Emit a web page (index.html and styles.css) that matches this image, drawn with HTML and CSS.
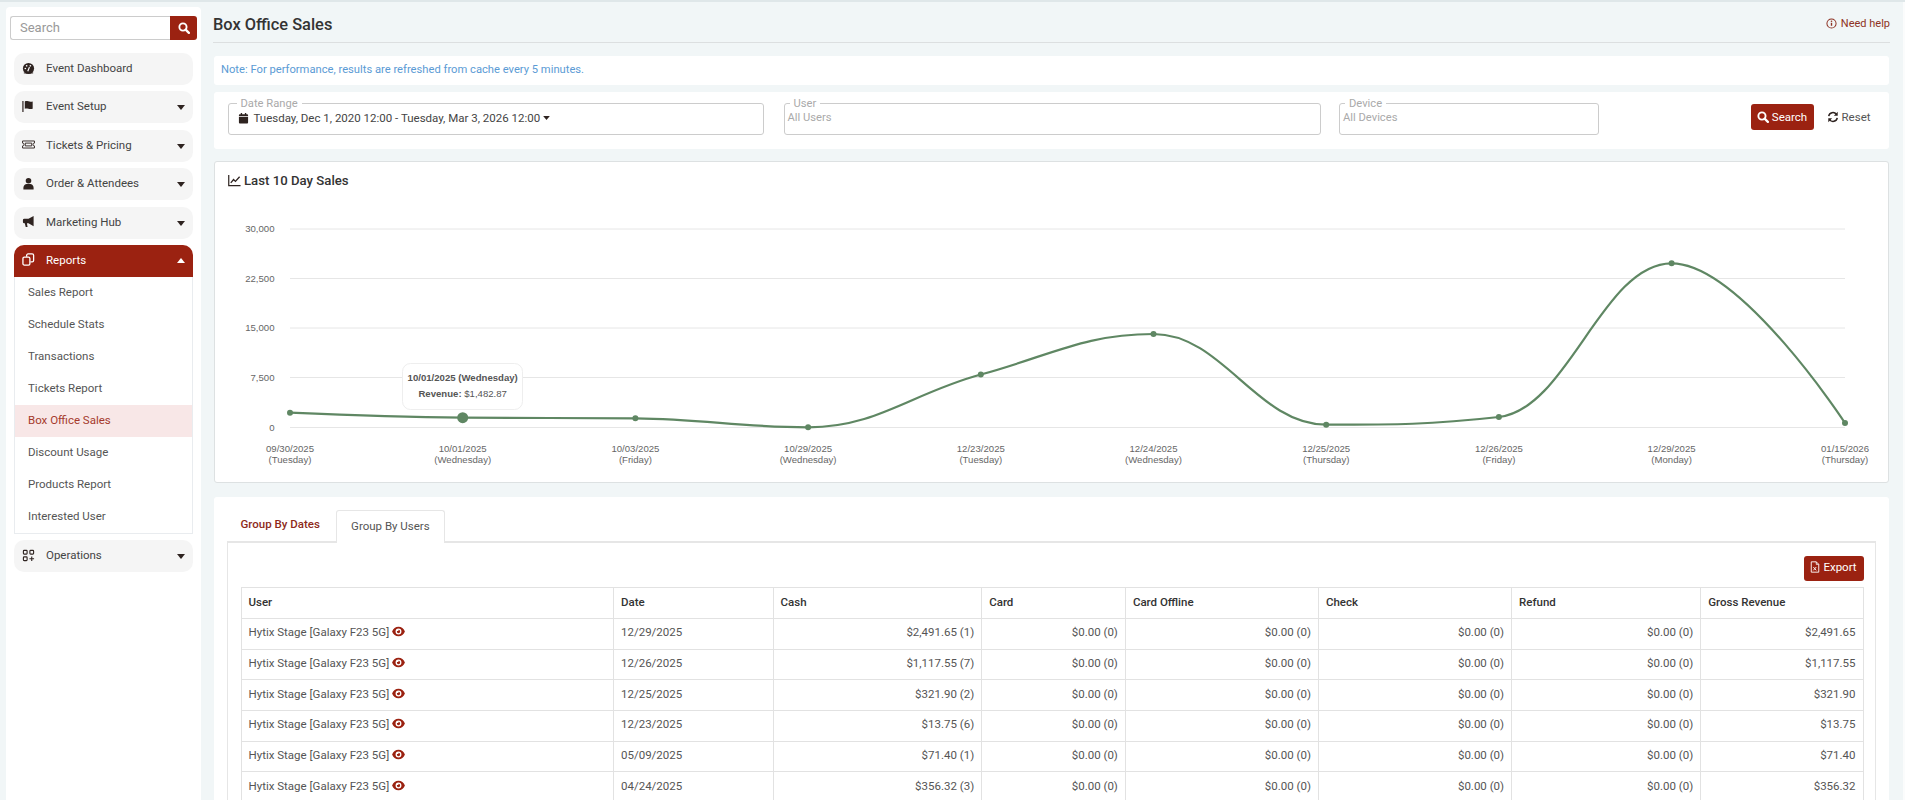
FILE: index.html
```html
<!DOCTYPE html>
<html lang="en">
<head>
<meta charset="utf-8">
<title>Box Office Sales</title>
<link rel="stylesheet" href="styles.css">
</head>
<body>
<svg class="defs" aria-hidden="true">
  <symbol id="i-caret" viewBox="0 0 10 6"><path d="M0 0h10L5 6z" fill="currentColor"/></symbol>
  <symbol id="i-search" viewBox="0 0 14 14"><circle cx="5.8" cy="5.8" r="4.2" fill="none" stroke="currentColor" stroke-width="2.2"/><path d="M8.9 8.9l3.8 3.8" stroke="currentColor" stroke-width="2.6" stroke-linecap="round"/></symbol>
  <symbol id="i-eye" viewBox="0 0 14 12"><path fill="currentColor" fill-rule="evenodd" d="M7 0.8c3.2 0 5.8 2.2 7 5.2-1.2 3-3.8 5.2-7 5.2S1.200 9 0 6c1.200-3 3.800-5.200 7-5.200zM7 2.800a3.200 3.200 0 1 0 0 6.400 3.200 3.200 0 0 0 0-6.400z"/><path fill="currentColor" d="M7 4.200a1.800 1.800 0 1 1-1.800 1.800c0-.5.3-.5.800-.5.600 0 1-.4 1-1 0-.2-.1-.3 0-.3z"/></symbol>
</svg>
<div class="app">
  <aside class="sidebar">
    <form class="side-search">
      <input class="side-input" type="text" placeholder="Search">
      <button class="side-btn" type="button"><svg class="ic-13"><use href="#i-search"/></svg></button>
    </form>
    <nav class="menu">
      <a class="item"><svg class="item-ic" viewBox="0 0 14 14"><circle cx="7" cy="7" r="6" fill="#2e2320"/><circle cx="3.600" cy="7" r=".9" fill="#fff"/><circle cx="5" cy="4" r=".9" fill="#fff"/><circle cx="9" cy="4" r=".9" fill="#fff"/><path d="M6.200 10L8 5.500" stroke="#fff" stroke-width="1.300"/><path d="M2 11.800h10" stroke="#2e2320" stroke-width="1"/></svg><span class="item-t">Event Dashboard</span></a>
      <a class="item"><svg class="item-ic" viewBox="0 0 14 14"><path d="M1 1v12" stroke="#2e2320" stroke-width="1.300"/><path d="M3 1.500c3-1 4.500 1 8.500 0v8c-4 1-5.500-1-8.500 0z" fill="#2e2320"/></svg><span class="item-t">Event Setup</span><svg class="caret"><use href="#i-caret"/></svg></a>
      <a class="item"><svg class="item-ic" viewBox="0 0 14 14"><path d="M.6 3.200h12.800v2.300a1.500 1.500 0 0 0 0 3v2.300H.6V8.500a1.500 1.500 0 0 0 0-3z" fill="none" stroke="#2e2320" stroke-width="1"/><path d="M3.500 5.500h7v3h-7z" fill="none" stroke="#2e2320" stroke-width="1"/></svg><span class="item-t">Tickets &amp; Pricing</span><svg class="caret"><use href="#i-caret"/></svg></a>
      <a class="item"><svg class="item-ic" viewBox="0 0 14 14"><circle cx="7" cy="4" r="3" fill="#2e2320"/><path d="M1.500 13.500v-2c0-2.500 2-4 3.500-4h4c1.500 0 3.500 1.500 3.500 4v2z" fill="#2e2320"/></svg><span class="item-t">Order &amp; Attendees</span><svg class="caret"><use href="#i-caret"/></svg></a>
      <a class="item"><svg class="item-ic" viewBox="0 0 14 14"><path d="M12.500 1L7 4H2.500A1.500 1.500 0 0 0 1 5.500v2A1.500 1.500 0 0 0 2.500 9H3l1 4h2L5.300 9H7l5.500 3z" fill="#2e2320"/></svg><span class="item-t">Marketing Hub</span><svg class="caret"><use href="#i-caret"/></svg></a>
      <a class="item item-open"><svg class="item-ic" viewBox="0 0 14 14"><rect x="1" y="4.500" width="7.500" height="8.500" rx="1.500" fill="none" stroke="#fff" stroke-width="1.400"/><path d="M5 4V2.500C5 1.700 5.700 1 6.500 1h4.500c.8 0 1.500.7 1.500 1.500V8c0 .8-.7 1.500-1.500 1.500H9" fill="none" stroke="#fff" stroke-width="1.400"/></svg><span class="item-t">Reports</span><svg class="caret caret-up"><use href="#i-caret"/></svg></a>
      <div class="sub">
        <a class="sub-item">Sales Report</a>
        <a class="sub-item">Schedule Stats</a>
        <a class="sub-item">Transactions</a>
        <a class="sub-item">Tickets Report</a>
        <a class="sub-item sub-active">Box Office Sales</a>
        <a class="sub-item">Discount Usage</a>
        <a class="sub-item">Products Report</a>
        <a class="sub-item">Interested User</a>
      </div>
      <a class="item"><svg class="item-ic" viewBox="0 0 14 14"><g fill="none" stroke="#2e2320" stroke-width="1.200"><rect x="1.500" y="1.500" width="4" height="4" rx=".8"/><rect x="8.500" y="1.500" width="4" height="4" rx=".8"/><rect x="1.500" y="8.500" width="4" height="4" rx=".8"/><path d="M10.500 8v5M8 10.500h5"/></g></svg><span class="item-t">Operations</span><svg class="caret"><use href="#i-caret"/></svg></a>
    </nav>
  </aside>
  <main class="main">
    <header class="page-head">
      <h1 class="page-title">Box Office Sales</h1>
      <a class="help"><svg class="help-ic" viewBox="0 0 12 12"><circle cx="6" cy="6" r="5" fill="none" stroke="currentColor" stroke-width="1.100"/><path d="M6 5.200v3.300" stroke="currentColor" stroke-width="1.500"/><circle cx="6" cy="3.500" r=".9" fill="currentColor"/></svg>Need help</a>
    </header>
    <div class="note">Note: For performance, results are refreshed from cache every 5 minutes.</div>
    <section class="filters">
      <fieldset class="fs fs-date">
        <legend class="fs-l">Date Range</legend>
        <div class="range"><svg class="cal" viewBox="0 0 12 12"><path d="M1 4.500h10V11a1 1 0 0 1-1 1H2a1 1 0 0 1-1-1zM1 3.700V3a1 1 0 0 1 1-1h1V.5h1.500V2h3V.5H9V2h1a1 1 0 0 1 1 1v.7z" fill="#2e2320"/></svg>Tuesday, Dec 1, 2020 12:00 - Tuesday, Mar 3, 2026 12:00<svg class="range-caret"><use href="#i-caret"/></svg></div>
      </fieldset>
      <fieldset class="fs fs-user">
        <legend class="fs-l">User</legend>
        <div class="ph">All Users</div>
      </fieldset>
      <fieldset class="fs fs-device">
        <legend class="fs-l">Device</legend>
        <div class="ph">All Devices</div>
      </fieldset>
      <div class="actions">
        <button class="btn" type="button"><svg class="ic-12"><use href="#i-search"/></svg>Search</button>
        <button class="reset" type="button"><svg class="ic-12" viewBox="0 0 14 14"><path d="M2 6a5 5 0 0 1 9-2M12 8a5 5 0 0 1-9 2" fill="none" stroke="#2e2320" stroke-width="1.700"/><path d="M12.500 1v4.500H8zM1.500 13V8.500H6z" fill="#2e2320"/></svg>Reset</button>
      </div>
    </section>
    <section class="chart-card">
      <h2 class="chart-title"><svg class="chart-ic" viewBox="0 0 14 14"><path d="M.8 1v11.500H13.500" fill="none" stroke="#2e2320" stroke-width="1.300"/><path d="M3 9.500l3-3.500 2 2 4.500-5" fill="none" stroke="#2e2320" stroke-width="1.400"/></svg>Last 10 Day Sales</h2>
      <svg class="chart" viewBox="215 200 1674 282" width="1674" height="282">
        <g class="grid">
          <path d="M290 229H1845M290 278.500H1845M290 328H1845M290 377.500H1845M290 427.500H1845"/>
        </g>
        <g class="y-labels">
          <text x="274.500" y="232">30,000</text>
          <text x="274.500" y="281.500">22,500</text>
          <text x="274.500" y="331">15,000</text>
          <text x="274.500" y="380.500">7,500</text>
          <text x="274.500" y="430.500">0</text>
        </g>
        <path class="line" d="M290 412.700C290 412.700 393.600 417.100 462.700 417.700C531.800 418.300 566.300 417.700 635.400 418.300C704.500 418.900 739 427.300 808.100 427.300C877.200 427.300 911.700 393.160 980.800 374.500C1049.900 355.840 1084.400 334 1153.500 334C1222.600 334 1257.100 424.700 1326.200 424.700C1395.300 424.700 1429.800 424.700 1498.900 417C1568 409.300 1602.500 263.300 1671.600 263.300C1740.700 263.300 1845 423 1845 423"/>
        <g class="dots">
          <circle cx="290" cy="412.700" r="3"/><circle cx="462.700" cy="417.700" r="5.500"/><circle cx="635.400" cy="418.300" r="3"/><circle cx="808.100" cy="427.300" r="3"/><circle cx="980.800" cy="374.500" r="3"/><circle cx="1153.500" cy="334" r="3"/><circle cx="1326.200" cy="424.700" r="3"/><circle cx="1498.900" cy="417" r="3"/><circle cx="1671.600" cy="263.300" r="3"/><circle cx="1845" cy="423" r="3"/>
        </g>
        <g class="x-labels">
          <text x="290" y="452">09/30/2025</text><text x="290" y="463">(Tuesday)</text>
          <text x="462.700" y="452">10/01/2025</text><text x="462.700" y="463">(Wednesday)</text>
          <text x="635.400" y="452">10/03/2025</text><text x="635.400" y="463">(Friday)</text>
          <text x="808.100" y="452">10/29/2025</text><text x="808.100" y="463">(Wednesday)</text>
          <text x="980.800" y="452">12/23/2025</text><text x="980.800" y="463">(Tuesday)</text>
          <text x="1153.500" y="452">12/24/2025</text><text x="1153.500" y="463">(Wednesday)</text>
          <text x="1326.200" y="452">12/25/2025</text><text x="1326.200" y="463">(Thursday)</text>
          <text x="1498.900" y="452">12/26/2025</text><text x="1498.900" y="463">(Friday)</text>
          <text x="1671.600" y="452">12/29/2025</text><text x="1671.600" y="463">(Monday)</text>
          <text x="1845" y="452">01/15/2026</text><text x="1845" y="463">(Thursday)</text>
        </g>
        <g class="tip">
          <rect x="402.500" y="363.500" width="120" height="46" rx="8"/>
          <text class="tip-b" x="462.700" y="381">10/01/2025 (Wednesday)</text>
          <text class="tip-v" x="462.700" y="397"><tspan class="tip-b">Revenue:</tspan> $1,482.87</text>
        </g>
      </svg>
    </section>
    <section class="table-card">
      <div class="tabs">
        <a class="tab tab-link">Group By Dates</a>
        <a class="tab tab-active">Group By Users</a>
      </div>
      <div class="tab-body">
        <div class="export-row">
          <button class="btn btn-export" type="button"><svg class="ic-export" viewBox="0 0 12 14"><path d="M1.500.8h6l3 3v9.400h-9z" fill="none" stroke="#fff" stroke-width="1.100"/><path d="M7.500.8v3h3" fill="none" stroke="#fff" stroke-width="1"/><path d="M4 7l3.500 4M7.500 7L4 11" stroke="#fff" stroke-width="1.100"/></svg>Export</button>
        </div>
        <table class="grid-table">
          <colgroup>
            <col class="c-user"><col class="c-date"><col class="c-cash"><col class="c-card"><col class="c-off"><col class="c-check"><col class="c-refund"><col class="c-gross">
          </colgroup>
          <thead>
            <tr><th>User</th><th>Date</th><th>Cash</th><th>Card</th><th>Card Offline</th><th>Check</th><th>Refund</th><th>Gross Revenue</th></tr>
          </thead>
          <tbody>
            <tr><td>Hytix Stage [Galaxy F23 5G] <svg class="eye"><use href="#i-eye"/></svg></td><td>12/29/2025</td><td class="num">$2,491.65 (1)</td><td class="num">$0.00 (0)</td><td class="num">$0.00 (0)</td><td class="num">$0.00 (0)</td><td class="num">$0.00 (0)</td><td class="num">$2,491.65</td></tr>
            <tr><td>Hytix Stage [Galaxy F23 5G] <svg class="eye"><use href="#i-eye"/></svg></td><td>12/26/2025</td><td class="num">$1,117.55 (7)</td><td class="num">$0.00 (0)</td><td class="num">$0.00 (0)</td><td class="num">$0.00 (0)</td><td class="num">$0.00 (0)</td><td class="num">$1,117.55</td></tr>
            <tr><td>Hytix Stage [Galaxy F23 5G] <svg class="eye"><use href="#i-eye"/></svg></td><td>12/25/2025</td><td class="num">$321.90 (2)</td><td class="num">$0.00 (0)</td><td class="num">$0.00 (0)</td><td class="num">$0.00 (0)</td><td class="num">$0.00 (0)</td><td class="num">$321.90</td></tr>
            <tr><td>Hytix Stage [Galaxy F23 5G] <svg class="eye"><use href="#i-eye"/></svg></td><td>12/23/2025</td><td class="num">$13.75 (6)</td><td class="num">$0.00 (0)</td><td class="num">$0.00 (0)</td><td class="num">$0.00 (0)</td><td class="num">$0.00 (0)</td><td class="num">$13.75</td></tr>
            <tr><td>Hytix Stage [Galaxy F23 5G] <svg class="eye"><use href="#i-eye"/></svg></td><td>05/09/2025</td><td class="num">$71.40 (1)</td><td class="num">$0.00 (0)</td><td class="num">$0.00 (0)</td><td class="num">$0.00 (0)</td><td class="num">$0.00 (0)</td><td class="num">$71.40</td></tr>
            <tr><td>Hytix Stage [Galaxy F23 5G] <svg class="eye"><use href="#i-eye"/></svg></td><td>04/24/2025</td><td class="num">$356.32 (3)</td><td class="num">$0.00 (0)</td><td class="num">$0.00 (0)</td><td class="num">$0.00 (0)</td><td class="num">$0.00 (0)</td><td class="num">$356.32</td></tr>
          </tbody>
        </table>
      </div>
    </section>
  </main>
</div>
</body>
</html>
```
FILE: styles.css
```css
* { box-sizing: border-box; }
html, body { margin: 0; height: 100%; overflow: hidden; }
body {
  background: #f1f6f7;
  border-top: 2px solid #dfe7e9;
  font-family: Roboto, Lato, sans-serif;
  font-size: 11.5px;
  color: #555;
}
.defs { position: absolute; width: 0; height: 0; }
.app { display: flex; height: 798px; overflow: hidden; }

/* Sidebar */
.sidebar {
  flex: 0 0 195px;
  width: 195px;
  min-width: 0;
  margin: 5px 0 0 6px;
  padding: 9px 4px 0;
  background: #fff;
  border-radius: 4px 4px 0 0;
}
.side-search { display: flex; height: 24px; margin-bottom: 13px; }
.side-input {
  flex: 1;
  width: 0;
  min-width: 0;
  padding: 0 9px 2px;
  border: 1px solid #ccc;
  border-right: 0;
  border-radius: 3px 0 0 3px;
  font: 13px Roboto, sans-serif;
  color: #555;
  outline: none;
}
.side-input::placeholder { color: #999; }
.side-btn {
  width: 27px;
  border: 0;
  padding: 0;
  border-radius: 0 3px 3px 0;
  background: #9b2211;
  color: #fff;
  display: flex;
  align-items: center;
  justify-content: center;
}
.ic-13 { width: 12px; height: 12px; }
.ic-12 { width: 12px; height: 12px; flex: none; }
.menu { margin: 0 4px; }
.item {
  display: flex;
  align-items: center;
  height: 32px;
  margin-bottom: 6.4px;
  padding: 0 8px 2px;
  background: #f5f5f5;
  border-radius: 10px;
  color: #444;
}
.item-ic { width: 13px; height: 13px; flex: none; margin-right: 11px; }
.item-t { flex: 1; }
.caret { width: 8px; height: 5px; color: #2e2320; flex: none; margin-top: 3px; }
.item-open {
  margin-bottom: 0;
  background: #9b2211;
  color: #fff;
  border-radius: 10px 10px 0 0;
}
.caret-up { color: #fff; transform: rotate(180deg); margin-top: 1px; }
.sub {
  border: 1px solid #e9ecef;
  border-top: 0;
  margin-bottom: 6.4px;
  background: #fff;
}
.sub-item {
  display: flex;
  align-items: center;
  height: 32px;
  padding: 0 0 1px 13px;
  color: #555;
}
.sub-active { background: #f8e7e7; color: #a53a2c; }

/* Main */
.main {
  flex: 1;
  min-width: 0;
  padding: 0 13px 0 12px;
  border-right: 2px solid #fbfcfc;
}
.page-head {
  display: flex;
  align-items: center;
  justify-content: space-between;
  height: 41px;
  padding-top: 2px;
  border-bottom: 1px solid #dcdfe0;
}
.page-title { margin: 0 0 -2px; font-size: 16.4px; font-weight: 500; color: #333; }
.help { display: flex; align-items: center; font-size: 11px; color: #8e3324; }
.help-ic { width: 11px; height: 11px; margin-right: 4px; }
.note {
  margin: 13px 1px 0;
  height: 29px;
  padding: 0 0 2px 7px;
  display: flex;
  align-items: center;
  background: #fff;
  border-radius: 3px;
  color: #5b9bd5;
  font-size: 11.2px;
}
.filters {
  display: flex;
  align-items: flex-start;
  margin: 7px 1px 0;
  height: 57px;
  padding: 6px 18.5px 0 13.5px;
  background: #fff;
  border-radius: 3px;
}
.fs {
  margin: 0;
  padding: 0 3px;
  height: 37px;
  border: 1px solid #ccc;
  border-radius: 3px;
  min-width: 0;
}
.fs-date { width: 536.5px; margin-right: 19.5px; padding-left: 10px; }
.fs-user { width: 537.5px; margin-right: 18px; }
.fs-device { width: 260px; }
.fs-l {
  margin-left: -2px;
  padding: 0 4px;
  font-size: 11.2px;
  line-height: 11px;
  color: #aaa;
}
.fs-user .fs-l, .fs-device .fs-l { margin-left: 2px; }
.range { display: flex; align-items: center; height: 18px; color: #444; margin-left: -1px; }
.cal { width: 11px; height: 12px; margin-right: 5px; }
.range-caret { width: 7px; height: 4px; margin-left: 3px; color: #2e2320; }
.ph { height: 17px; line-height: 17px; color: #aaa; font-size: 11.2px; }
.actions { margin-left: auto; margin-top: 6px; display: flex; align-items: flex-start; }
.btn {
  display: flex;
  align-items: center;
  justify-content: center;
  gap: 3px;
  height: 26px;
  width: 63px;
  padding: 0 0 1px;
  border: 0;
  border-radius: 3px;
  background: #9b2211;
  color: #fff;
  font: 11.5px Roboto, sans-serif;
}
.reset {
  display: flex;
  align-items: center;
  gap: 3px;
  height: 26px;
  margin-left: 13px;
  padding: 0;
  border: 0;
  background: none;
  color: #555;
  font: 11.5px Roboto, sans-serif;
}
.chart-card {
  margin: 12px 1px 0;
  height: 322px;
  background: #fff;
  border: 1px solid #dde1e2;
  border-radius: 3px;
}
.chart-title {
  display: flex;
  align-items: center;
  height: 38px;
  margin: 0;
  padding: 0 0 2px 13px;
  font-size: 13.2px;
  font-weight: 500;
  color: #333;
}
.chart-ic { width: 13px; height: 13px; margin-right: 3px; }
.chart { display: block; font-family: "Liberation Sans", Arial, sans-serif; font-size: 9.6px; }
.grid path { stroke: #e6e6e6; fill: none; stroke-width: 1; }
.y-labels text { fill: #666; text-anchor: end; }
.x-labels text { fill: #666; text-anchor: middle; }
.line { fill: none; stroke: #5f8763; stroke-width: 2.2; }
.dots circle { fill: #5f8763; }
.tip rect { fill: #fff; stroke: #eee; stroke-width: 1; }
.tip text { fill: #555; text-anchor: middle; }
.tip-b { font-weight: 700; }
.tip-v { font-weight: 400; }

/* Table card */
.table-card {
  margin: 14px 1px 0;
  padding: 13px 13px 0;
  background: #fff;
  border-radius: 3px 3px 0 0;
}
.tabs { display: flex; height: 32px; position: relative; z-index: 1; }
.tab {
  display: flex;
  align-items: center;
  height: 33px;
  padding: 0 13.5px 5px;
  white-space: nowrap;
  font-weight: 500;
}
.tab-link { color: #8e2a1a; }
.tab-active {
  width: 109px;
  justify-content: center;
  padding: 0 0 3px;
  margin-left: 2.5px;
  background: #fff;
  border: 1px solid #e6e6e6;
  border-bottom: 0;
  border-radius: 3px 3px 0 0;
  color: #555;
  font-weight: 400;
}
.tab-body {
  padding: 13px 11.5px 0 12.5px;
  border-top: 2px solid #e6e6e6;
  border-left: 1px solid #e6e6e6;
  border-right: 1px solid #e6e6e6;
  margin-top: -1px;
}
.export-row { display: flex; justify-content: flex-end; margin-bottom: 6px; }
.btn-export { width: 60px; height: 25px; padding-bottom: 3px; }
.ic-export { width: 10px; height: 12px; }
.grid-table { width: 100%; table-layout: fixed; border-collapse: collapse; }
.c-user { width: 372.5px; }
.c-date { width: 159.5px; }
.c-cash { width: 208.7px; }
.c-card { width: 143.7px; }
.c-off { width: 193.1px; }
.c-check { width: 193.1px; }
.c-refund { width: 189.2px; }
.grid-table th, .grid-table td {
  border: 1px solid #e2e2e2;
  padding: 0 7px 3px;
  white-space: nowrap;
  overflow: hidden;
}
.grid-table th { height: 31px; text-align: left; font-weight: 500; color: #333; }
.grid-table td { height: 30.67px; color: #555; }
.grid-table td.num { text-align: right; }
.eye { width: 13px; height: 11px; color: #9b2211; vertical-align: -1px; }
```
